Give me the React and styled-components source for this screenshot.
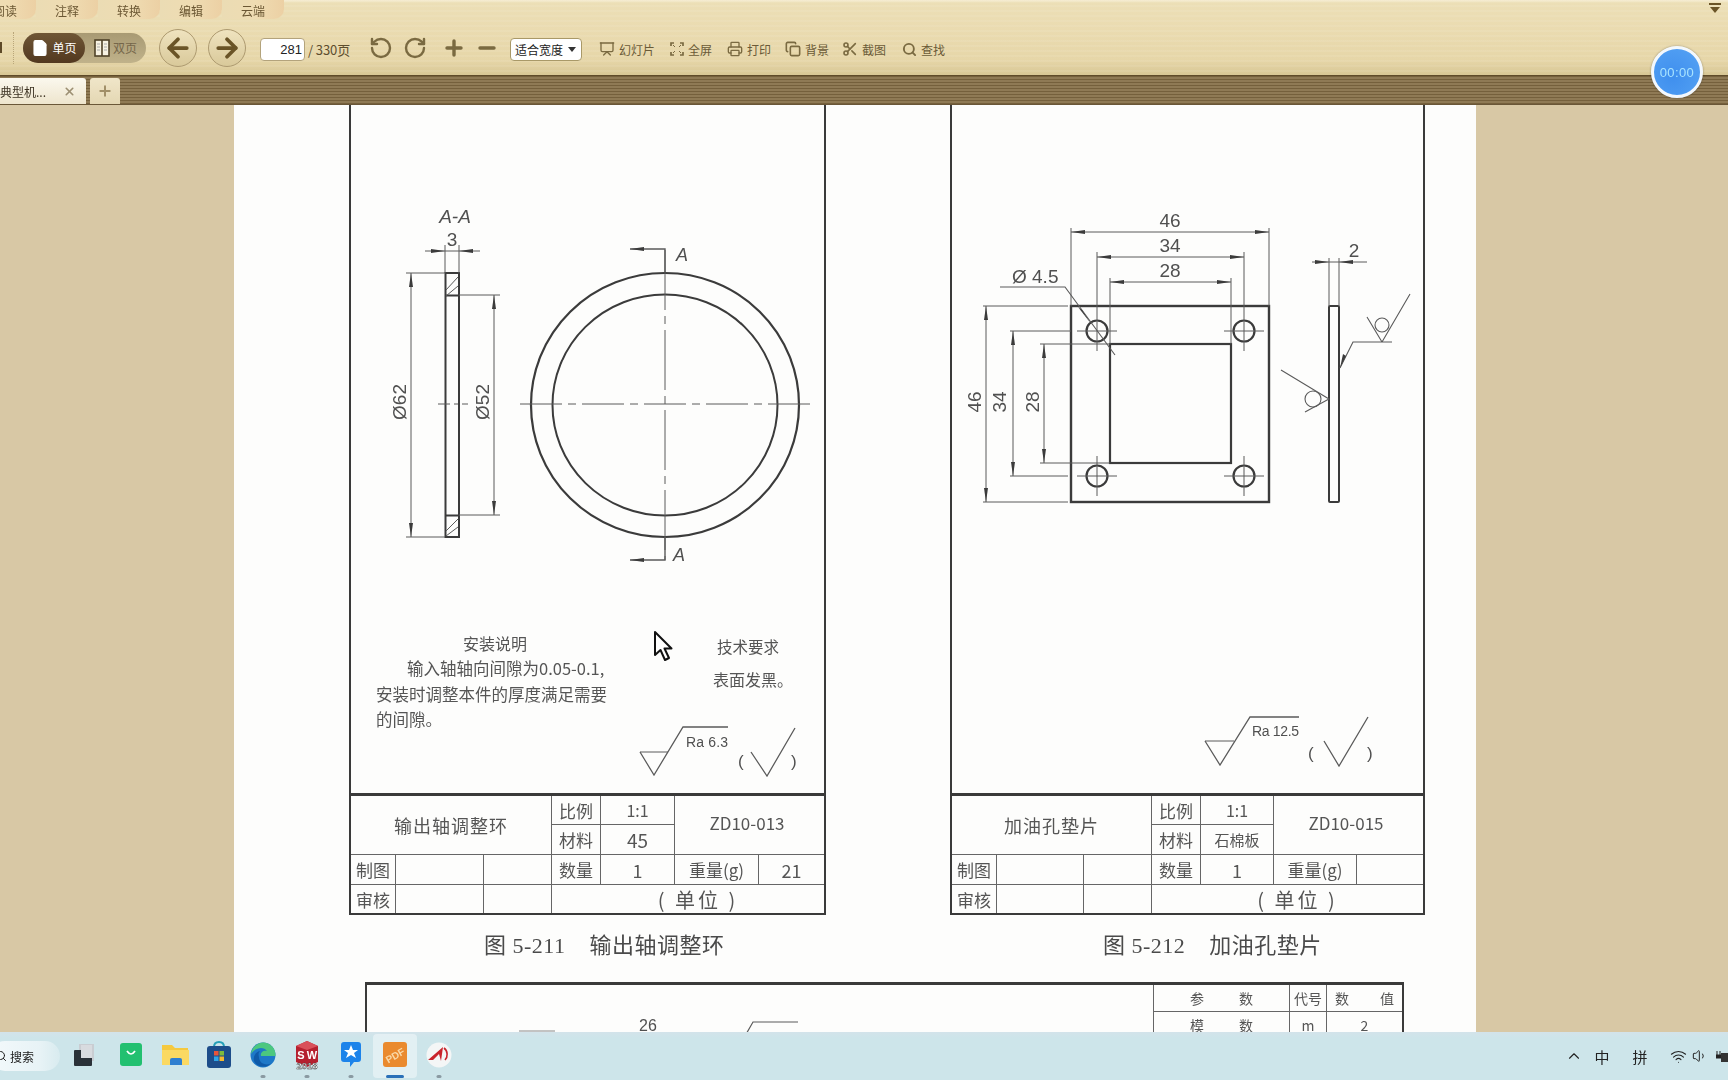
import React from "react";
import styled, { createGlobalStyle } from "styled-components";
import { FileText, RotateCcw, RotateCw, Plus, Minus, ArrowLeft, ArrowRight, Presentation, Printer, Copy, Scissors, Search, X, ChevronUp, Wifi, Volume1 } from "lucide-react";

const CJK = `"Noto Sans CJK SC", "Liberation Sans", sans-serif`;
const Global = createGlobalStyle`
  html, body { margin: 0; padding: 0; background: #d8c8a5; overflow: hidden; }
  * { box-sizing: border-box; }
`;

const Root = styled.div`
  position: relative; width: 1728px; height: 1080px; overflow: hidden;
  display: flex; flex-direction: column; font-family: ${CJK};
`;
const Toolbar = styled.header`
  height: 75px; flex: none; display: flex; flex-direction: column; filter: blur(0.3px);
  background:
    repeating-linear-gradient(180deg, rgba(255,255,255,.07) 0 2px, rgba(0,0,0,0) 2px 5px),
    linear-gradient(180deg, #f5ecd0 0, #ecdfb6 3px, #eadbb0 30px, #e6d6a8 60px, #d8c795 75px);
`;
const RibbonTabs = styled.nav`
  display: flex; height: 20px; margin-left: -26px; flex: none; position: relative;
`;
const RibbonTab = styled.div`
  width: 62px; height: 19px; display: flex; align-items: center; justify-content: center;
  font-size: 12px; color: #6b5733; padding-top: 1px;
  border-radius: 0 0 10px 0;
  background: linear-gradient(90deg, #ebdcb4 0%, #efdcb2 55%, #ecd0a4 100%);
`;
const MenuCaret = styled.div`
  position: absolute; right: 7px; top: 3px; width: 12px; height: 8px;
  border-top: 2px solid #6a5427;
  &::after {
    content: ""; position: absolute; left: 1px; top: 2px;
    border-left: 5px solid transparent; border-right: 5px solid transparent; border-top: 6px solid #6a5427;
  }
`;
const ToolRow = styled.div`
  display: flex; align-items: center; height: 56px;
`;
const EdgeNub = styled.div`
  width: 2px; height: 11px; background: #5e4a28; flex: none;
`;
const DotSep = styled.div`
  width: 1px; height: 32px; margin-left: 11px; border-left: 1px dotted #b9a67a; flex: none;
`;
const Pill = styled.div`
  margin-left: 9px; width: 123px; height: 30px; border-radius: 15px; display: flex; flex: none;
  background: linear-gradient(180deg, #a89a74, #c0b28a);
`;
const PillItem = styled.div`
  width: ${p => p.$w}px; height: 30px; border-radius: 15px; display: flex; align-items: center; justify-content: center; gap: 3px;
  font-size: 12px; color: ${p => (p.$on ? "#fff" : "#75664a")};
  background: ${p => (p.$on ? "linear-gradient(180deg, #6f5636, #52381f)" : "transparent")};
`;
const NavCircle = styled.div`
  width: 38px; height: 38px; border-radius: 50%; flex: none; margin-left: ${p => p.$ml}px;
  display: flex; align-items: center; justify-content: center; color: #6a5427;
  border: 1px solid #ad9a70; background: linear-gradient(180deg, #efe3bf, #d9c99a);
`;
const PageInput = styled.input`
  width: 45px; height: 23px; margin: 3px 0 0 14px; flex: none; text-align: right; padding: 0 2px 0 0;
  font: 13px "Liberation Sans", sans-serif; color: #222; background: #fff;
  border: 1px solid #b3a37c; border-radius: 4px; outline: none;
`;
const PageCount = styled.span`
  margin: 3px 0 0 3px; width: 44px; flex: none; font-size: 13px; color: #5c4d2e; white-space: nowrap;
  letter-spacing: -0.1px;
`;
const IconBtn = styled.div`
  width: ${p => p.$w}px; margin-left: ${p => p.$ml || 0}px; flex: none; display: flex; justify-content: center; color: #7a6a41;
`;
const ZoomSelect = styled.div`
  width: 72px; height: 23px; margin: 3px 0 0 10px; flex: none; display: flex; align-items: center; justify-content: space-between;
  padding: 0 5px 0 4px; font-size: 12px; color: #222; background: #fff; border: 1px solid #a99968; border-radius: 4px;
  &::after { content: ""; border-left: 4px solid transparent; border-right: 4px solid transparent; border-top: 5px solid #333; }
`;
const ToolItem = styled.div`
  width: ${p => p.$w}px; margin: 3px 0 0 ${p => p.$ml || 0}px; flex: none; display: flex; align-items: center; gap: 4px;
  font-size: 12px; color: #6a5a37; white-space: nowrap; letter-spacing: -0.1px;
  svg { color: #7a6a41; flex: none; }
`;
const TabStrip = styled.div`
  height: 30px; flex: none; display: flex; align-items: flex-end; gap: 4px; padding-left: 0; filter: blur(0.3px);
  border-top: 1px solid #5f4b2a; border-bottom: 1px solid #6a5738;
  background: repeating-linear-gradient(180deg, #75603c 0 1px, #8f7a55 1px 3px);
`;
const DocTab = styled.div`
  width: 86px; height: 26px; display: flex; align-items: center; justify-content: space-between; padding: 0 10px 0 0;
  font-size: 12px; color: #3a3020; white-space: nowrap; overflow: hidden;
  background: linear-gradient(180deg, #fbf8ee, #eee5cd); border-radius: 0 3px 0 0;
  svg { color: #9c8f72; flex: none; }
`;
const AddTab = styled.div`
  width: 30px; height: 26px; display: flex; align-items: center; justify-content: center; color: #a18f68;
  background: linear-gradient(180deg, #f0e6c9, #e4d7b3); border-radius: 3px 3px 0 0;
`;
const Timer = styled.div`
  position: absolute; left: 1651px; top: 46px; width: 52px; height: 52px; border-radius: 50%;
  display: flex; align-items: center; justify-content: center;
  border: 3px solid #f3f8fd; color: #a9e4ff; font: 13px "Liberation Sans", sans-serif; letter-spacing: .4px;
  background: radial-gradient(circle at 40% 60%, #3f8fee, #4f9df2 70%, #69aef4);
  box-shadow: 0 0 2px rgba(40,40,40,.5);
`;
const Main = styled.main`
  flex: 1; min-height: 0; overflow: hidden; background: #d8c8a5;
  padding-left: 234px;
`;
const Page = styled.div`
  width: 1242px; height: 100%; background: #fdfdfc; padding-left: 115px; overflow: hidden; filter: blur(0.4px);
`;
const Sheets = styled.div`
  display: grid; grid-template-columns: 477px 475px; column-gap: 124px;
`;
const Sheet = styled.section`
  height: 810px; display: flex; flex-direction: column;
  border-left: 2px solid #3a3a3a; border-right: 2px solid #3a3a3a; border-bottom: 2px solid #3a3a3a;
`;
const Dwg = styled.svg`
  display: block; flex: none;
  text { font-family: "Liberation Sans", ${CJK}; fill: #505050; }
`;
const Note = styled.text`
  font-family: ${CJK} !important; font-size: ${p => p.$s || 16}px; fill: #555 !important;
`;
const TitleBlock = styled.div`
  display: grid; flex: none; border-top: 3px solid #3a3a3a;
  grid-template-columns: ${p => p.$cols};
  grid-template-rows: 29px 30px 30px 28px;
`;
const Cell = styled.div`
  display: flex; align-items: center; justify-content: center; white-space: pre;
  font-size: ${p => p.$s || 17}px; color: #555; letter-spacing: ${p => p.$ls || 0}px;
  padding: 0 ${p => p.$pr || 0}px ${p => p.$pb || 0}px ${p => p.$pl || 0}px;
  grid-column: ${p => p.$col || "auto"}; grid-row: ${p => p.$row || "auto"};
  border-right: ${p => (p.$nr ? "0" : "1px solid #666")};
  border-bottom: ${p => (p.$nb ? "0" : "1px solid #666")};
`;
const Captions = styled.div`
  display: grid; grid-template-columns: 477px 475px; column-gap: 124px; height: 67px; padding-top: 19px;
`;
const Caption = styled.div`
  padding-left: ${p => p.$indent}px; font-size: 22px; line-height: 24px; color: #4a4a4a; white-space: pre; letter-spacing: .5px;
  font-family: "Liberation Serif", "Noto Sans CJK SC", serif;
`;
const NextSheet = styled.section`
  width: 1039px; margin-left: 16px; height: 90px; display: flex; justify-content: space-between;
  border: 2px solid #3a3a3a; border-top-width: 3px;
`;
const ParamTable = styled.div`
  display: grid; flex: none; grid-template-columns: 136px 37px 75px; grid-template-rows: 27px 27px;
  align-self: flex-start; border-left: 1px solid #666;
`;
const ParamCell = styled.div`
  display: flex; align-items: center; justify-content: ${p => (p.$spread ? "space-between" : "center")};
  padding: 0 ${p => (p.$spread ? p.$spread : 0)}px; font-size: 14px; color: #555;
  border-right: ${p => (p.$nr ? "0" : "1px solid #666")}; border-bottom: 1px solid #666;
`;
const Cursor = styled.svg`
  position: absolute; left: 653px; top: 630px;
`;
const Taskbar = styled.footer`
  height: 48px; flex: none; display: flex; align-items: center; filter: blur(0.25px);
  background: linear-gradient(180deg, #d3e3ea, #cde5ea 6px);
`;
const SearchPill = styled.div`
  width: 70px; height: 30px; margin-left: -10px; flex: none; display: flex; align-items: center; gap: 3px; padding-left: 5px;
  border-radius: 15px; font-size: 12px; color: #222; background: linear-gradient(90deg, #f3f9fb, #e8f3f6 70%, #d8ebef);
`;
const Slot = styled.div`
  position: relative; width: 44px; height: 44px; flex: none; margin-left: ${p => p.$ml || 0}px;
  display: flex; align-items: center; justify-content: center; border-radius: 4px; padding-bottom: 3px;
  background: ${p => (p.$active ? "rgba(255,255,255,.42)" : "transparent")};
`;
const RunDot = styled.i`
  position: absolute; bottom: 0; left: 50%; transform: translateX(-50%); border-radius: 2px;
  width: ${p => (p.$active ? 18 : 5)}px; height: 3px; background: ${p => (p.$active ? "#2a70b8" : "#8a9aa2")};
`;
const Tray = styled.div`
  margin-left: auto; display: flex; align-items: center; color: #222; flex: none;
`;
const TrayItem = styled.span`
  width: ${p => p.$w}px; flex: none; display: flex; justify-content: ${p => (p.$end ? "flex-end" : "center")}; font-size: 15px;
  svg { flex: none; }
`;

/* ---------- drawing helpers ---------- */
const INK = "#3b3b3b", THIN = "#5a5a5a";
const Head = ({ x, y, dir }) => {
  const L = 14, W = 2;
  const p = {
    l: `${x},${y} ${x + L},${y - W} ${x + L},${y + W}`,
    r: `${x},${y} ${x - L},${y - W} ${x - L},${y + W}`,
    u: `${x},${y} ${x - W},${y + L} ${x + W},${y + L}`,
    d: `${x},${y} ${x - W},${y - L} ${x + W},${y - L}`,
  }[dir];
  return <polygon points={p} fill={INK} />;
};
const L = ({ d, w = 1, c = THIN, dash }) => <path d={d} stroke={c} strokeWidth={w} strokeDasharray={dash} fill="none" />;
const HDim = ({ x1, x2, y }) => (<><L d={`M${x1} ${y}H${x2}`} /><Head x={x1} y={y} dir="l" /><Head x={x2} y={y} dir="r" /></>);
const VDim = ({ y1, y2, x }) => (<><L d={`M${x} ${y1}V${y2}`} /><Head x={x} y={y1} dir="u" /><Head x={x} y={y2} dir="d" /></>);
const VText = ({ x, y, s = 19, children }) => (
  <text transform={`translate(${x} ${y}) rotate(-90)`} textAnchor="middle" fontSize={s}>{children}</text>
);
const Surface = ({ tri, top, label, lx, ly, paren, check }) => (
  <>
    <L d={`M${tri[0]} ${tri[1]}H${tri[2]}`} />
    <L d={`M${tri[0]} ${tri[1]}L${tri[3]} ${tri[4]}L${top[0]} ${top[1]}H${top[2]}`} w={1.3} />
    <text x={lx} y={ly} fontSize="14" textLength={top[2] - lx}>{label}</text>
    <text x={paren[0]} y={paren[2]} fontSize="17">(</text>
    <text x={paren[1]} y={paren[2]} fontSize="17">)</text>
    <L d={check} w={1.3} />
  </>
);
const hole = (cx, cy) => (
  <g key={cx + "-" + cy}>
    <circle cx={cx} cy={cy} r="10.5" fill="none" stroke={INK} strokeWidth="2.2" />
    <L d={`M${cx - 20} ${cy}H${cx + 20}M${cx} ${cy - 20}V${cy + 20}`} />
  </g>
);

const RingDrawing = () => (
  <Dwg width="473" height="688" viewBox="351 105 473 688">
    <ellipse cx="665" cy="405" rx="134" ry="132" fill="none" stroke={INK} strokeWidth="2.2" />
    <ellipse cx="665" cy="405" rx="112.500" ry="110.500" fill="none" stroke={INK} strokeWidth="2" />
    <L d="M520 404H810" dash="42 6 8 6" />
    <L d="M665 250V560" dash="60 6 8 6" />
    <L d="M630 249H665V272" w={1.4} /><Head x={630} y={249} dir="l" />
    <L d="M630 560H665V537" w={1.4} /><Head x={630} y={560} dir="l" />
    <text x="676" y="261" fontSize="18" fontStyle="italic">A</text>
    <text x="673" y="561" fontSize="18" fontStyle="italic">A</text>
    <text x="455" y="223" fontSize="19" fontStyle="italic" textAnchor="middle">A-A</text>
    <text x="452" y="246" fontSize="19" textAnchor="middle">3</text>
    <rect x="445.500" y="273" width="13.500" height="264" fill="none" stroke={INK} strokeWidth="2" />
    <L d="M445 295.500H459M445 515.500H459" w={2} c={INK} />
    <L d="M446 290L458 277M446 296L458 286M446 531L458 519M446 536L458 527" />
    <L d="M438 404H468" dash="12 4 4 4" />
    <L d="M445 245V273M459 245V273" />
    <L d="M425 251H480" /><Head x={445} y={251} dir="r" /><Head x={459} y={251} dir="l" />
    <L d="M406 273H445M406 537H445M459 295H500M459 515H500" />
    <VDim x={411} y1={273} y2={537} />
    <VDim x={494} y1={295} y2={515} />
    <VText x={406} y={402}>Ø62</VText>
    <VText x={489} y={402}>Ø52</VText>
    <Note x="463" y="650" $s={16}>安装说明</Note>
    <Note x="407" y="675" $s={16.5}>输入轴轴向间隙为0.05-0.1,</Note>
    <Note x="376" y="701" $s={16.5}>安装时调整本件的厚度满足需要</Note>
    <Note x="376" y="726" $s={16.5}>的间隙。</Note>
    <Note x="717" y="653" $s={15.5}>技术要求</Note>
    <Note x="713" y="686" $s={16}>表面发黑。</Note>
    <Surface tri={[640, 752, 668, 654, 775]} top={[683, 727, 728]} label="Ra 6.3" lx={686} ly={747}
      paren={[738, 791, 767]} check="M751 752L767 776L795 728" />
  </Dwg>
);

const PlateDrawing = () => (
  <Dwg width="471" height="688" viewBox="952 105 471 688">
    <rect x="1071" y="306" width="198" height="196" fill="none" stroke={INK} strokeWidth="2.400" />
    <rect x="1110" y="344" width="121" height="119" fill="none" stroke={INK} strokeWidth="2.200" />
    {[[1097, 331], [1244, 331], [1097, 476], [1244, 476]].map(([x, y]) => hole(x, y))}
    <L d="M1071 228V306M1269 228V306M1097 252V311M1244 252V311M1110 278V344M1231 278V344" />
    <HDim x1={1071} x2={1269} y={232} />
    <HDim x1={1097} x2={1244} y={257} />
    <HDim x1={1110} x2={1231} y={282} />
    <text x="1170" y="227" fontSize="19" textAnchor="middle">46</text>
    <text x="1170" y="252" fontSize="19" textAnchor="middle">34</text>
    <text x="1170" y="277" fontSize="19" textAnchor="middle">28</text>
    <text x="1012" y="283" fontSize="19">Ø 4.5</text>
    <L d="M1000 287H1065L1115 355" w={1.1} />
    <polygon points="1082,310 1078,307 1092,325" fill={INK} />
    <L d="M983 306H1068M983 502H1068M1010 331H1071M1010 476H1068M1040 344H1110M1040 463H1110" />
    <VDim x={986} y1={306} y2={502} />
    <VDim x={1013} y1={331} y2={476} />
    <VDim x={1044} y1={344} y2={463} />
    <VText x={981} y={402}>46</VText>
    <VText x={1006} y={402}>34</VText>
    <VText x={1039} y={402}>28</VText>
    <rect x="1329" y="306" width="10" height="196" rx="1" fill="none" stroke={INK} strokeWidth="2" />
    <L d="M1329 258V306M1339 258V306M1312 262H1367" /><Head x={1329} y={262} dir="r" /><Head x={1339} y={262} dir="l" />
    <text x="1354" y="257" fontSize="19" textAnchor="middle">2</text>
    <L d="M1340 368L1353 342H1392M1382 342L1410 294M1367 317L1382 342" w={1.1} />
    <polygon points="1340,368 1343,354 1346,356" fill={INK} />
    <circle cx="1382" cy="325" r="7" fill="none" stroke={THIN} strokeWidth="1.100" />
    <L d="M1281 370L1329 399L1305 412" w={1.1} />
    <circle cx="1313" cy="399" r="8" fill="none" stroke={THIN} strokeWidth="1.100" />
    <Surface tri={[1205, 741, 1234, 1220, 765]} top={[1250, 717, 1299]} label="Ra 12.5" lx={1252} ly={736}
      paren={[1308, 1367, 759]} check="M1324 741L1339 766L1368 717" />
  </Dwg>
);

const GearFragment = () => (
  <Dwg width="780" height="60" viewBox="367 985 780 60">
    <text x="648" y="1031" fontSize="16" textAnchor="middle">26</text>
    <L d="M519 1031H555" c="#888" />
    <L d="M745 1036L753 1022H798" w={1.2} />
  </Dwg>
);

const BlockRows = ({ name, mat, num, code, weight, matSize }) => (
  <>
    <Cell $col="1 / 4" $row="1 / 3" $s={18} $ls={1}>{name}</Cell>
    <Cell $s={17}>比例</Cell>
    <Cell $s={16}>1:1</Cell>
    <Cell $col="6 / 8" $row="1 / 3" $nr $s={17} $pr={5} $pb={5}>{code}</Cell>
    <Cell $s={17}>材料</Cell>
    <Cell $s={matSize}>{mat}</Cell>
    <Cell $s={17}>制图</Cell><Cell /><Cell />
    <Cell $s={17}>数量</Cell>
    <Cell $s={18}>{num}</Cell>
    <Cell $s={17}>重量(g)</Cell>
    <Cell $nr $s={18}>{weight}</Cell>
    <Cell $nb $s={17}>审核</Cell><Cell $nb /><Cell $nb />
    <Cell $col="4 / 8" $nb $nr $s={20} $ls={3} $pl={20}>{"( 单位 )"}</Cell>
  </>
);

/* ---------- toolbar & taskbar icons ---------- */
const SinglePage = () => <FileText size={18} fill="#fff" color="#fff" strokeWidth={1.5} />;
const DoublePage = () => (
  <svg width="16" height="18" viewBox="0 0 16 18"><rect x="1" y="1" width="14" height="16" fill="#f7f2e2" stroke="#4f4229" strokeWidth="1.6" /><path d="M8 1V17" stroke="#4f4229" strokeWidth="1.6" /><path d="M3 5H6M3 8H6M3 11H6M10 5H13M10 8H13M10 11H13" stroke="#aaa" /></svg>
);
const FullScreen = () => (
  <svg width="14" height="14" viewBox="0 0 14 14" fill="none" stroke="currentColor" strokeWidth="1.700"><path d="M1 4V1H4M10 1H13V4M13 10V13H10M4 13H1V10" /><path d="M3 3L5 5M11 3L9 5M3 11L5 9M11 11L9 9" strokeWidth="1" /></svg>
);
const SW = () => (
  <svg width="26" height="30" viewBox="0 0 26 30"><path d="M13 1L24 6V22L13 27L2 22V6Z" fill="#b5202f" /><path d="M13 1L24 6L13 10L2 6Z" fill="#d9505a" /><text x="7" y="19" fontSize="11" fontWeight="700" fill="#fff" textAnchor="middle" fontFamily="Liberation Sans">S</text><text x="18" y="19" fontSize="11" fontWeight="700" fill="#fff" textAnchor="middle" fontFamily="Liberation Sans">W</text><text x="13" y="29" fontSize="9.500" fontWeight="700" fill="#fff" stroke="#333" strokeWidth=".4" textAnchor="middle" fontFamily="Liberation Sans">2018</text></svg>
);
const TaskIcons = {
  view: () => <svg width="22" height="24" viewBox="0 0 22 24"><rect x="6" y="1" width="15" height="17" fill="#c9cdd2" /><rect x="1" y="7" width="18" height="16" rx="1" fill="#2a3138" /><rect x="8" y="2" width="11" height="13" fill="#d8dbdf" /></svg>,
  bag: () => <svg width="22" height="23" viewBox="0 0 22 23"><rect width="22" height="23" rx="3" fill="#22c070" /><path d="M7 8Q11 14 15 8" stroke="#fff" strokeWidth="1.700" fill="none" /></svg>,
  folder: () => <svg width="27" height="23" viewBox="0 0 27 23"><path d="M0 2H10L13 5H26V22H0Z" fill="#f5c93f" /><path d="M0 7H27V22H0Z" fill="#fbd962" /><path d="M8 22V17Q8 15 10 15H18Q20 15 20 17V22Z" fill="#2f7fd0" /></svg>,
  store: () => <svg width="24" height="27" viewBox="0 0 24 27"><path d="M7 6Q7 1 12 1T17 6" stroke="#25a0b8" strokeWidth="2" fill="none" /><rect y="5" width="24" height="22" rx="3" fill="#1d4d8a" /><rect x="7" y="10" width="4.500" height="4.500" fill="#e8553a" /><rect x="12.500" y="10" width="4.500" height="4.500" fill="#7fba3c" /><rect x="7" y="15.500" width="4.500" height="4.500" fill="#2ea5e8" /><rect x="12.500" y="15.500" width="4.500" height="4.500" fill="#f5b82e" /></svg>,
  edge: () => <svg width="26" height="26" viewBox="0 0 26 26"><circle cx="13" cy="13" r="12.500" fill="#1e78c8" /><path d="M1 12C2 4 9 0 14 .5C21 1 26 7 25.500 14H11C10 10 14 8 17 9C14 4 5 5 1 12Z" fill="#4cc77f" /><path d="M9 15C9 21 15 24 21 21.500C17 26 7 26 4 19C3 15 5 10 10 9C8 11 8.500 13 9 15Z" fill="#0f5aa8" /></svg>,
  ding: () => <svg width="20" height="26" viewBox="0 0 20 26"><path d="M3 0H17Q20 0 20 3V17Q20 20 17 20H13L9 25V20H3Q0 20 0 17V3Q0 0 3 0Z" fill="#1c83ea" /><path d="M10 3L12 8L17 8L13 11L15 16L10 13L5 16L7 11L3 8L8 8Z" fill="#fff" /></svg>,
  pdf: () => <svg width="24" height="25" viewBox="0 0 24 25"><rect width="24" height="25" rx="3" fill="#ea8a2e" /><text x="12" y="17" fontSize="10" fontWeight="700" fill="#f9d9a8" textAnchor="middle" fontFamily="Liberation Sans" transform="rotate(-30 12 13)">PDF</text></svg>,
  acro: () => <svg width="26" height="26" viewBox="0 0 26 26"><circle cx="13" cy="13" r="12.500" fill="#f4f6f6" /><path d="M2 18L17 5L15 19L13 12L7 18Z" fill="#c9242c" /><path d="M18 6C22 9 22 15 19 18" stroke="#c9242c" strokeWidth="1.600" fill="none" /></svg>,
};

export default function App() {
  return (
    <Root>
      <Global />
      <Toolbar>
        <RibbonTabs>
          {["阅读", "注释", "转换", "编辑", "云端"].map(t => <RibbonTab key={t}>{t}</RibbonTab>)}
        </RibbonTabs>
        <MenuCaret />
        <ToolRow>
          <EdgeNub />
          <DotSep />
          <Pill>
            <PillItem $w={62} $on><SinglePage />单页</PillItem>
            <PillItem $w={61}><DoublePage />双页</PillItem>
          </Pill>
          <NavCircle $ml={13}><ArrowLeft size={30} strokeWidth={3} /></NavCircle>
          <NavCircle $ml={11}><ArrowRight size={30} strokeWidth={3} /></NavCircle>
          <PageInput readOnly value="281" />
          <PageCount>/ 330页</PageCount>
          <IconBtn $w={26} $ml={16}><RotateCcw size={24} strokeWidth={2.4} /></IconBtn>
          <IconBtn $w={26} $ml={8}><RotateCw size={24} strokeWidth={2.4} /></IconBtn>
          <IconBtn $w={26} $ml={13}><Plus size={24} strokeWidth={3.4} /></IconBtn>
          <IconBtn $w={26} $ml={7}><Minus size={24} strokeWidth={3.4} /></IconBtn>
          <ZoomSelect>适合宽度</ZoomSelect>
          <ToolItem $w={71} $ml={17}><Presentation size={16} />幻灯片</ToolItem>
          <ToolItem $w={57}><FullScreen />全屏</ToolItem>
          <ToolItem $w={58}><Printer size={16} />打印</ToolItem>
          <ToolItem $w={57}><Copy size={16} strokeWidth={2.4} />背景</ToolItem>
          <ToolItem $w={60}><Scissors size={16} strokeWidth={2.4} />截图</ToolItem>
          <ToolItem $w={46}><Search size={15} strokeWidth={3} />查找</ToolItem>
        </ToolRow>
      </Toolbar>
      <TabStrip>
        <DocTab>典型机...<X size={13} strokeWidth={3} /></DocTab>
        <AddTab><Plus size={16} strokeWidth={3} /></AddTab>
      </TabStrip>
      <Main>
        <Page>
          <Sheets>
            <Sheet>
              <RingDrawing />
              <TitleBlock $cols="45px 88px 68px 49px 74px 84px 65px">
                <BlockRows name="输出轴调整环" mat="45" num="1" code="ZD10-013" weight="21" matSize={19} />
              </TitleBlock>
            </Sheet>
            <Sheet>
              <PlateDrawing />
              <TitleBlock $cols="45px 87px 68px 49px 73px 83px 66px">
                <BlockRows name="加油孔垫片" mat="石棉板" num="1" code="ZD10-015" weight="" matSize={15} />
              </TitleBlock>
            </Sheet>
          </Sheets>
          <Captions>
            <Caption $indent={135}>{"图 5-211    输出轴调整环"}</Caption>
            <Caption $indent={153}>{"图 5-212    加油孔垫片"}</Caption>
          </Captions>
          <NextSheet>
            <GearFragment />
            <ParamTable>
              <ParamCell $spread={36}><span>参</span><span>数</span></ParamCell>
              <ParamCell>代号</ParamCell>
              <ParamCell $nr $spread={8}><span>数</span><span>值</span></ParamCell>
              <ParamCell $spread={36}><span>模</span><span>数</span></ParamCell>
              <ParamCell>m</ParamCell>
              <ParamCell $nr>2</ParamCell>
            </ParamTable>
          </NextSheet>
        </Page>
      </Main>
      <Taskbar>
        <SearchPill><Search size={12} />搜索</SearchPill>
        <Slot $ml={2}><TaskIcons.view /></Slot>
        <Slot $ml={3}><TaskIcons.bag /></Slot>
        <Slot><TaskIcons.folder /></Slot>
        <Slot><TaskIcons.store /></Slot>
        <Slot><TaskIcons.edge /><RunDot /></Slot>
        <Slot><SW /><RunDot /></Slot>
        <Slot><TaskIcons.ding /><RunDot /></Slot>
        <Slot $active><TaskIcons.pdf /><RunDot $active /></Slot>
        <Slot><TaskIcons.acro /><RunDot /></Slot>
        <Tray>
          <TrayItem $w={20}><ChevronUp size={18} strokeWidth={1.5} /></TrayItem>
          <TrayItem $w={36}>中</TrayItem>
          <TrayItem $w={40}>拼</TrayItem>
          <TrayItem $w={36}><Wifi size={17} strokeWidth={1.5} /></TrayItem>
          <TrayItem $w={8}><Volume1 size={16} strokeWidth={1.5} /></TrayItem>
          <TrayItem $w={24} $end>
            <svg width="12" height="14" viewBox="0 0 12 14"><path d="M1 2V6M4 2V6M0 6H5V9H0Z" stroke="#222" fill="#222" /><rect x="5" y="4" width="7" height="9" fill="#333" /></svg>
          </TrayItem>
        </Tray>
      </Taskbar>
      <Timer>00:00</Timer>
      <Cursor width="20" height="32" viewBox="0 0 20 32">
        <path d="M2 2V25L7.500 20L12 30L16 28L11.500 18.500H18.500Z" fill="#fff" stroke="#111" strokeWidth="2" strokeLinejoin="round" />
      </Cursor>
    </Root>
  );
}
